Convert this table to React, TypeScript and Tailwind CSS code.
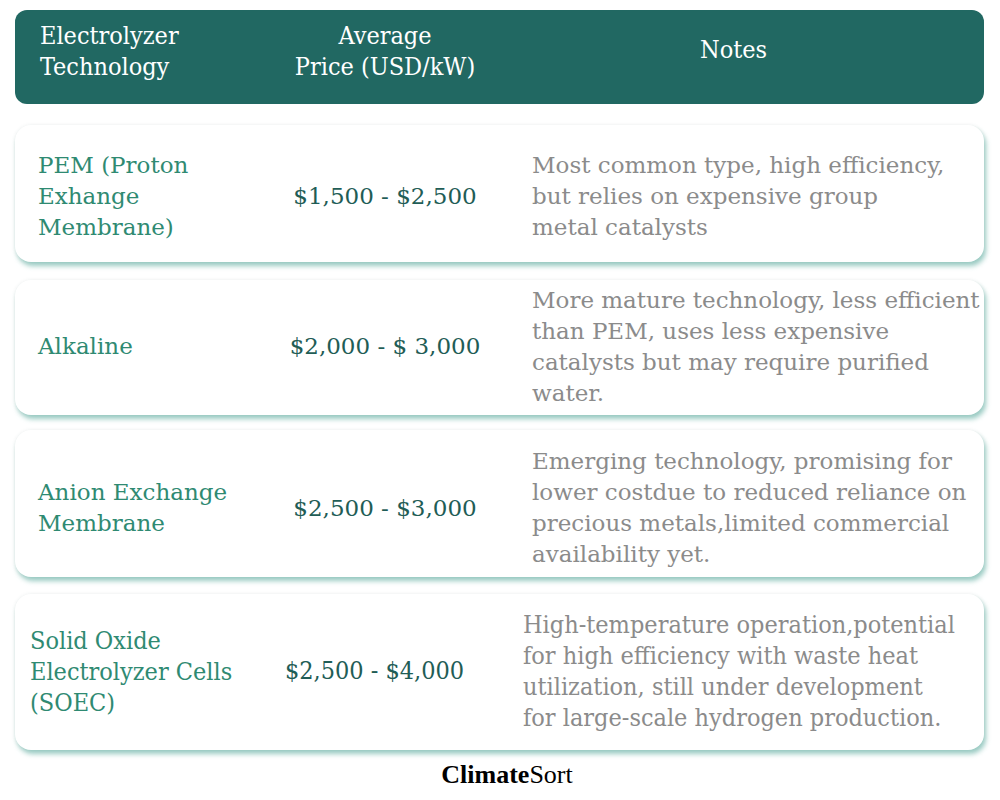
import React from 'react'

type Row = {
  name: string[]
  price: string
  notes: string[]
  last?: boolean
  height: string
  shift: string
}

const rows: Row[] = [
  {
    name: ['PEM (Proton', 'Exhange', 'Membrane)'],
    price: '$1,500 - $2,500',
    notes: ['Most common type, high efficiency,', 'but relies on expensive group', 'metal catalysts'],
    height: 'h-[137px]',
    shift: 'pt-[6px]',
  },
  {
    name: ['Alkaline'],
    price: '$2,000 - $ 3,000',
    notes: [
      'More mature technology, less efficient',
      'than PEM, uses less expensive',
      'catalysts but may require purified',
      'water.',
    ],
    height: 'h-[135px]',
    shift: 'pb-[2px]',
  },
  {
    name: ['Anion Exchange', 'Membrane'],
    price: '$2,500 - $3,000',
    notes: [
      'Emerging technology, promising for',
      'lower costdue to reduced reliance on',
      'precious metals,limited commercial',
      'availability yet.',
    ],
    height: 'h-[147px]',
    shift: 'pt-[9px]',
  },
  {
    name: ['Solid Oxide', 'Electrolyzer Cells', '(SOEC)'],
    price: '$2,500 - $4,000',
    notes: [
      'High-temperature operation,potential',
      'for high efficiency with waste heat',
      'utilization, still under development',
      'for large-scale hydrogen production.',
    ],
    last: true,
    height: 'h-[156px]',
    shift: 'pb-[2px]',
  },
]

const serif = "font-['DejaVu_Serif',serif] text-[23px]"
const condensed = "font-['DejaVu_Serif_Condensed','Liberation_Serif',serif] text-[25px]"

const TableRow: React.FC<{ row: Row }> = ({ row }) => {
  const font = row.last ? condensed : serif
  return (
    <div
      className={`${row.height} ${row.shift} flex items-center rounded-2xl bg-white shadow-[2px_4px_5px_rgba(120,185,175,0.75),0_0_4px_rgba(0,0,0,0.06)] ${
        row.last ? 'pl-[15px]' : 'pl-[23px]'
      }`}
    >
      <div className={`${font} leading-[31px] text-[#2f8a72] ${row.last ? 'w-[237px]' : 'w-[232px]'}`}>
        {row.name.map((line) => (
          <div key={line}>{line}</div>
        ))}
      </div>
      <div className={`${font} text-[#1f5d56] text-center whitespace-nowrap ${row.last ? 'w-[215px]' : 'w-[230px]'}`}>
        {row.price}
      </div>
      <div
        className={`${font} whitespace-nowrap leading-[31px] text-[#8b8b8b] ${
          row.last ? 'ml-[41px]' : 'ml-[32px]'
        }`}
      >
        {row.notes.map((line) => (
          <div key={line}>{line}</div>
        ))}
      </div>
    </div>
  )
}

export default function App() {
  return (
    <div className="w-[1000px] h-[800px] bg-white overflow-hidden">
      <div className="px-[15px] pt-[10px] pr-[16px]">
        <div className="h-[94px] rounded-xl bg-[#216862] flex items-center text-white font-['DejaVu_Serif_Condensed','Liberation_Serif',serif] text-[25px] leading-[31px]">
          <div className="pl-[25px] w-[270px] -mt-[12px]">
            <div>Electrolyzer</div>
            <div>Technology</div>
          </div>
          <div className="w-[200px] text-center -mt-[12px]">
            <div>Average</div>
            <div>Price (USD/kW)</div>
          </div>
          <div className="flex-1 text-center -mt-[16px] pr-[2px]">Notes</div>
        </div>

        <div className="mt-[21px] flex flex-col">
          <TableRow row={rows[0]} />
          <div className="h-[18px]" />
          <TableRow row={rows[1]} />
          <div className="h-[15px]" />
          <TableRow row={rows[2]} />
          <div className="h-[17px]" />
          <TableRow row={rows[3]} />
        </div>

        <div className="mt-[8px] text-center font-['Liberation_Serif',serif] text-[26px] leading-[34px] text-black pl-[15px]">
          <span className="font-bold">Climate</span>
          <span>Sort</span>
        </div>
      </div>
    </div>
  )
}
